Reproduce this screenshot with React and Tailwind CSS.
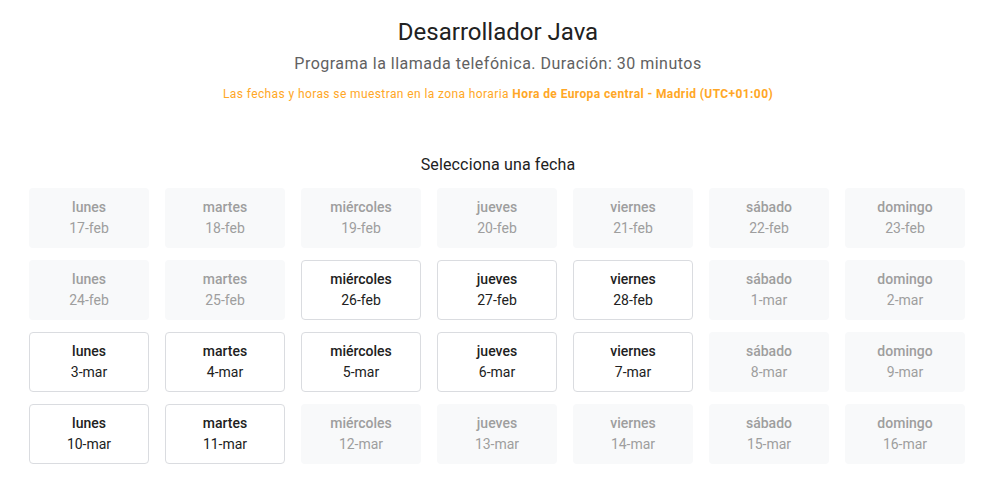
import React from "react";

const rows = [
  [["lunes","17-feb",0],["martes","18-feb",0],["miércoles","19-feb",0],["jueves","20-feb",0],["viernes","21-feb",0],["sábado","22-feb",0],["domingo","23-feb",0]],
  [["lunes","24-feb",0],["martes","25-feb",0],["miércoles","26-feb",1],["jueves","27-feb",1],["viernes","28-feb",1],["sábado","1-mar",0],["domingo","2-mar",0]],
  [["lunes","3-mar",1],["martes","4-mar",1],["miércoles","5-mar",1],["jueves","6-mar",1],["viernes","7-mar",1],["sábado","8-mar",0],["domingo","9-mar",0]],
  [["lunes","10-mar",1],["martes","11-mar",1],["miércoles","12-mar",0],["jueves","13-mar",0],["viernes","14-mar",0],["sábado","15-mar",0],["domingo","16-mar",0]],
];

export default function App() {
  return (
    <div className="w-full min-h-[491px] bg-white" style={{ fontFamily: "Roboto, 'Liberation Sans', sans-serif" }}>
      <div className="flex flex-col items-center pt-[16px]">
        <h1 className="text-[24px] leading-[32px] text-[#212121] font-normal">Desarrollador Java</h1>
        <p className="mt-1 text-[16px] leading-[24px] tracking-[0.5px] text-[#616161]">Programa la llamada telefónica. Duración: 30 minutos</p>
        <p className="mt-[10px] text-[12px] leading-[16px] tracking-[0.4px] text-[#ffa726]">
          Las fechas y horas se muestran en la zona horaria <span className="font-bold">Hora de Europa central - Madrid (UTC+01:00)</span>
        </p>
        <h2 className="mt-[51px] text-[16px] leading-[24px] tracking-[0.15px] text-[#212121] font-normal">Selecciona una fecha</h2>
        <div className="mt-[11px] mr-[2px] grid grid-cols-[repeat(7,120px)] gap-x-4 gap-y-3">
          {rows.flat().map(([d, dt, a], i) =>
            a ? (
              <div key={i} className="h-[60px] rounded border border-[#dadce0] bg-white flex flex-col items-center justify-center text-[14px] leading-[21px] text-[#212121]">
                <span className="font-medium">{d}</span>
                <span>{dt}</span>
              </div>
            ) : (
              <div key={i} className="h-[60px] rounded bg-[#f8f9fa] flex flex-col items-center justify-center text-[14px] leading-[21px] text-[#9e9e9e]">
                <span className="font-medium">{d}</span>
                <span>{dt}</span>
              </div>
            )
          )}
        </div>
      </div>
    </div>
  );
}
